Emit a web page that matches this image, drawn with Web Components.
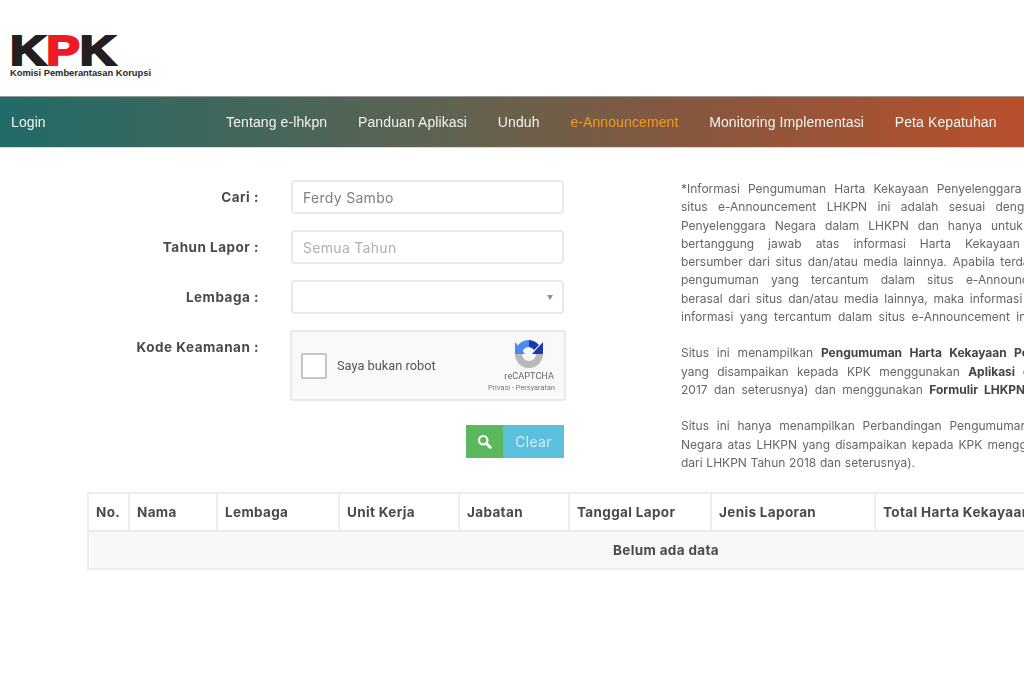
<!DOCTYPE html>
<html lang="id">
<head>
<meta charset="utf-8">
<title>e-Announcement LHKPN</title>
<style>
  html, body { margin: 0; height: 100%; overflow: hidden; background: #fff; }
  body {
    font-family: "Inter", "Lato", sans-serif;
    font-size: 14px;
    color: #555;
  }
  #page { width: 1024px; height: 687px; filter: blur(0.72px); }
</style>
</head>
<body>
<div id="page">
  <kpk-header></kpk-header>
  <kpk-nav>
    <nav-link slot="left">Login</nav-link>
    <nav-link>Tentang e-lhkpn</nav-link>
    <nav-link>Panduan Aplikasi</nav-link>
    <nav-link>Unduh</nav-link>
    <nav-link active>e-Announcement</nav-link>
    <nav-link>Monitoring Implementasi</nav-link>
    <nav-link>Peta Kepatuhan</nav-link>
  </kpk-nav>
  <search-section>
    <search-form slot="form"></search-form>
    <notice-panel slot="notice"></notice-panel>
  </search-section>
  <result-table></result-table>
</div>

<script>
const kpkHeaderTemplate = document.createElement('template');
kpkHeaderTemplate.innerHTML = `
  <style>
    :host { display: block; height: 96px; background: #fff; }
    svg { display: block; }
    .brand { font-family: "Liberation Sans", Arial, sans-serif; font-weight: 700; }
  </style>
  <svg width="170" height="96" viewBox="0 0 170 96">
    <text class="brand" x="10" y="64.5" font-size="42" textLength="106" lengthAdjust="spacingAndGlyphs" fill="#231f20" stroke="#231f20" stroke-width="2.2">K<tspan fill="#ed1c24" stroke="#ed1c24">P</tspan>K</text>
    <text class="brand" x="10" y="76" font-size="8.4" textLength="141" lengthAdjust="spacingAndGlyphs" fill="#2a2a2a">Komisi Pemberantasan Korupsi</text>
  </svg>
`;

class KpkHeader extends HTMLElement {
  constructor() {
    super();
    this.attachShadow({ mode: 'open' });
    this.shadowRoot.appendChild(kpkHeaderTemplate.content.cloneNode(true));
  }
}
customElements.define('kpk-header', KpkHeader);

// the bar runs 8px past the window on both sides so the blur does not fade its ends
const kpkNavTemplate = document.createElement('template');
kpkNavTemplate.innerHTML = `
  <style>
    :host {
      display: flex;
      align-items: center;
      justify-content: space-between;
      box-sizing: border-box;
      height: 52px;
      margin: 0 -8px;
      padding: 0 20px 0 8px;
      background: linear-gradient(90deg, #1f6b68 0%, #5d6352 42%, #85583f 66%, #bb4f2c 100%);
      border-top: 1px solid #9a9a9a;
      border-bottom: 1px solid #d8d8d8;
    }
    .links { display: flex; align-items: center; }
  </style>
  <slot name="left"></slot>
  <div class="links"><slot></slot></div>
`;

class KpkNav extends HTMLElement {
  constructor() {
    super();
    this.attachShadow({ mode: 'open' });
    this.shadowRoot.appendChild(kpkNavTemplate.content.cloneNode(true));
  }
}
customElements.define('kpk-nav', KpkNav);

const navLinkTemplate = document.createElement('template');
navLinkTemplate.innerHTML = `
  <style>
    :host {
      display: block;
      padding: 0 15.4px;
      font-family: "Liberation Sans", Arial, sans-serif;
      font-size: 14px;
      letter-spacing: 0.1px;
      color: #f2f4ee;
      white-space: nowrap;
    }
    :host([slot="left"]) { padding: 0 0 0 11px; }
    :host([active]) { color: #f09a1f; }
  </style>
  <slot></slot>
`;

class NavLink extends HTMLElement {
  constructor() {
    super();
    this.attachShadow({ mode: 'open' });
    this.shadowRoot.appendChild(navLinkTemplate.content.cloneNode(true));
  }
}
customElements.define('nav-link', NavLink);

const searchSectionTemplate = document.createElement('template');
searchSectionTemplate.innerHTML = `
  <style>
    :host {
      display: grid;
      grid-template-columns: 565px 420px;
      column-gap: 116px;
      height: 312px;
      padding-top: 32px;
    }
  </style>
  <slot name="form"></slot>
  <slot name="notice"></slot>
`;

class SearchSection extends HTMLElement {
  constructor() {
    super();
    this.attachShadow({ mode: 'open' });
    this.shadowRoot.appendChild(searchSectionTemplate.content.cloneNode(true));
  }
}
customElements.define('search-section', SearchSection);

const textFieldTemplate = document.createElement('template');
textFieldTemplate.innerHTML = `
  <style>
    :host {
      display: flex;
      align-items: center;
      box-sizing: border-box;
      height: 34px;
      padding: 0 10px;
      border: 2px solid #e9e9e9;
      border-radius: 4px;
      background: #fff;
      color: #808080;
      font-size: 14px;
      letter-spacing: 0.3px;
      white-space: nowrap;
    }
    :host([placeholder]) { color: #b0b0b0; }
    .arrow {
      margin-left: auto;
      margin-right: -1px;
      width: 0;
      height: 0;
      border-left: 3px solid transparent;
      border-right: 3px solid transparent;
      border-top: 5px solid #8f8f8f;
      display: none;
    }
    :host([select]) .arrow { display: block; }
  </style>
  <slot></slot>
  <span class="arrow"></span>
`;

class TextField extends HTMLElement {
  constructor() {
    super();
    this.attachShadow({ mode: 'open' });
    this.shadowRoot.appendChild(textFieldTemplate.content.cloneNode(true));
  }
}
customElements.define('text-field', TextField);

const captchaBoxTemplate = document.createElement('template');
captchaBoxTemplate.innerHTML = `
  <style>
    :host {
      display: flex;
      align-items: center;
      box-sizing: border-box;
      width: 276px;
      height: 71px;
      margin-left: -1px;
      padding: 0 9px 0 9px;
      background: #f9f9f9;
      border: 2px solid #e9e9e9;
      border-radius: 3px;
      font-family: "Roboto", "Liberation Sans", sans-serif;
    }
    .check {
      width: 26px;
      height: 26px;
      box-sizing: border-box;
      background: #fff;
      border: 2px solid #c4c4c4;
      border-radius: 2px;
      flex: none;
    }
    .label { margin-left: 10px; font-size: 12.8px; color: #555; }
    .brand {
      margin-left: auto;
      display: flex;
      flex-direction: column;
      align-items: flex-end;
      width: 70px;
    }
    svg { display: block; margin: 0 11px 1px 0; }
    .name { font-size: 9.2px; line-height: 12px; color: #666; margin-right: 1px; }
    .terms { font-size: 7.4px; line-height: 11px; color: #777; white-space: nowrap; }
  </style>
  <span class="check"></span>
  <span class="label">Saya bukan robot</span>
  <div class="brand">
    <svg width="30" height="30" viewBox="0 0 30 30" fill="none">
      <path d="M4.5 15 A10.5 10.5 0 0 0 25.5 15" stroke="#b8b8b8" stroke-width="7"/>
      <path d="M15 1 A14 14 0 0 0 1 15 L8 15 A7 7 0 0 1 15 8 Z" fill="#4a8cf0"/>
      <path d="M1 3 L1 15 L11 15 Z" fill="#4a8cf0"/>
      <path d="M15 1 A14 14 0 0 1 25 6 L20 11 A7 7 0 0 0 15 8 Z" fill="#1a3aa8"/>
      <path d="M29 3 L29 15 L18 15 Z" fill="#1a3aa8"/>
    </svg>
    <span class="name">reCAPTCHA</span>
    <span class="terms">Privasi - Persyaratan</span>
  </div>
`;

class CaptchaBox extends HTMLElement {
  constructor() {
    super();
    this.attachShadow({ mode: 'open' });
    this.shadowRoot.appendChild(captchaBoxTemplate.content.cloneNode(true));
  }
}
customElements.define('captcha-box', CaptchaBox);

const searchFormTemplate = document.createElement('template');
searchFormTemplate.innerHTML = `
  <style>
    :host { display: block; }
    .row {
      display: grid;
      grid-template-columns: 259px 273px;
      column-gap: 32px;
      align-items: center;
      margin-bottom: 16px;
    }
    .row.top { align-items: start; margin-bottom: 24px; }
    .row.top label { line-height: 34px; }
    label {
      text-align: right;
      font-weight: 700;
      font-size: 13.5px;
      letter-spacing: 0.5px;
      color: #4a4a4a;
      white-space: nowrap;
    }
    .actions { display: flex; justify-content: flex-end; width: 564px; }
    .btn {
      display: flex;
      align-items: center;
      justify-content: center;
      height: 33px;
      box-sizing: border-box;
      color: #fff;
    }
    .search { width: 37px; background: #5cb85c; }
    .clear { width: 61px; background: #5bc0de; color: #d6eff6; font-size: 14px; letter-spacing: 0.3px; }
  </style>
  <div class="row"><label>Cari :</label><text-field>Ferdy Sambo</text-field></div>
  <div class="row"><label>Tahun Lapor :</label><text-field placeholder>Semua Tahun</text-field></div>
  <div class="row"><label>Lembaga :</label><text-field select></text-field></div>
  <div class="row top"><label>Kode Keamanan :</label><captcha-box></captcha-box></div>
  <div class="actions">
    <div class="btn search">
      <svg width="15" height="15" viewBox="0 0 15 15" fill="none" stroke="#fff">
        <circle cx="6.2" cy="6.2" r="4.2" stroke-width="2.2"/>
        <path d="M9.4 9.4 L13.4 13.4" stroke-width="2.8" stroke-linecap="round"/>
      </svg>
    </div>
    <div class="btn clear">Clear</div>
  </div>
`;

class SearchForm extends HTMLElement {
  constructor() {
    super();
    this.attachShadow({ mode: 'open' });
    this.shadowRoot.appendChild(searchFormTemplate.content.cloneNode(true));
  }
}
customElements.define('search-form', SearchForm);

const noticePanelTemplate = document.createElement('template');
noticePanelTemplate.innerHTML = `
  <style>
    :host {
      display: block;
      font-size: 12px;
      line-height: 18.25px;
      color: #666;
      white-space: nowrap;
    }
    p { margin: 0 0 18.25px; }
    span { display: block; }
    b { color: #444; }
  </style>
`;

// word spacing per line, the source text is justified and runs past the window
const noticeParagraphs = [
  [
    ['*Informasi Pengumuman Harta Kekayaan Penyelenggara', 4.8],
    ['situs e-Announcement LHKPN ini adalah sesuai dengan', 7],
    ['Penyelenggara Negara dalam LHKPN dan hanya untuk', 5.6],
    ['bertanggung jawab atas informasi Harta Kekayaan', 10.6],
    ['bersumber dari situs dan/atau media lainnya. Apabila terdapat', 2.2],
    ['pengumuman yang tercantum dalam situs e-Announcement', 8.8],
    ['berasal dari situs dan/atau media lainnya, maka informasi', 2.4],
    ['informasi yang tercantum dalam situs e-Announcement ini', 3]
  ],
  [
    ['Situs ini menampilkan <b>Pengumuman Harta Kekayaan Penyelenggara</b>', 4.5],
    ['yang disampaikan kepada KPK menggunakan <b>Aplikasi e-LHKPN</b>', 5],
    ['2017 dan seterusnya) dan menggunakan <b>Formulir LHKPN Model</b>', 3]
  ],
  [
    ['Situs ini hanya menampilkan Perbandingan Pengumuman', 4.4],
    ['Negara atas LHKPN yang disampaikan kepada KPK menggunakan', 1.8],
    ['dari LHKPN Tahun 2018 dan seterusnya).', 0.3]
  ]
];

class NoticePanel extends HTMLElement {
  constructor() {
    super();
    this.attachShadow({ mode: 'open' });
    this.shadowRoot.appendChild(noticePanelTemplate.content.cloneNode(true));

    noticeParagraphs.forEach((lines) => {
      const p = document.createElement('p');
      lines.forEach(([html, spacing]) => {
        const line = document.createElement('span');
        line.innerHTML = html;
        line.style.wordSpacing = spacing + 'px';
        p.appendChild(line);
      });
      this.shadowRoot.appendChild(p);
    });
  }
}
customElements.define('notice-panel', NoticePanel);

const resultTableTemplate = document.createElement('template');
resultTableTemplate.innerHTML = `
  <style>
    :host {
      display: block;
      margin: 0 0 0 87px;
      width: 1158px;
      font-size: 13.5px;
      letter-spacing: 0.35px;
    }
    table {
      width: 1158px;
      table-layout: fixed;
      border-collapse: collapse;
      color: #4a4a4a;
    }
    th, td { border: 2px solid #ececec; font-weight: 700; white-space: nowrap; }
    th { height: 36px; padding: 0 7px; text-align: left; background: #fff; }
    td { height: 36px; padding: 0; text-align: center; background: #f8f8f8; }
  </style>
  <table>
    <colgroup>
      <col style="width:41px"><col style="width:88px"><col style="width:122px"><col style="width:120px">
      <col style="width:110px"><col style="width:142px"><col style="width:164px"><col>
    </colgroup>
    <thead>
      <tr>
        <th>No.</th><th>Nama</th><th>Lembaga</th><th>Unit Kerja</th>
        <th>Jabatan</th><th>Tanggal Lapor</th><th>Jenis Laporan</th><th>Total Harta Kekayaan</th>
      </tr>
    </thead>
    <tbody>
      <tr><td colspan="8">Belum ada data</td></tr>
    </tbody>
  </table>
`;

class ResultTable extends HTMLElement {
  constructor() {
    super();
    this.attachShadow({ mode: 'open' });
    this.shadowRoot.appendChild(resultTableTemplate.content.cloneNode(true));
  }
}
customElements.define('result-table', ResultTable);
</script>
</body>
</html>
